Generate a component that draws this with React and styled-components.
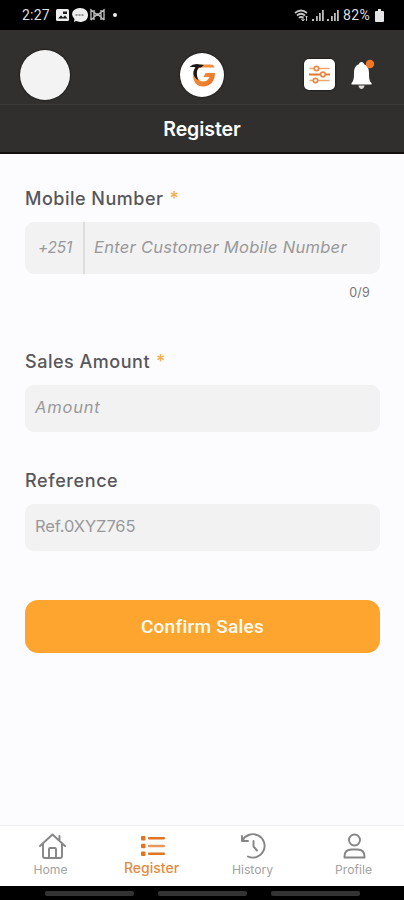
import React from "react";
import styled, { createGlobalStyle } from "styled-components";

const GlobalStyle = createGlobalStyle`
  *, *::before, *::after { box-sizing: border-box; }
  body { margin: 0; background: #fcfcfe; font-family: Inter, "Open Sans", sans-serif; }
`;

const Screen = styled.div`
  width: 404px;
  height: 900px;
  display: flex;
  flex-direction: column;
  overflow: hidden;
  background: #fcfcfe;
`;

const StatusBar = styled.div`
  height: 30px;
  flex: none;
  display: flex;
  align-items: center;
  justify-content: space-between;
  padding: 0 20px 0 22px;
  background: #000;
  color: #dedede;
  font: 400 14px/30px Roboto, sans-serif;
`;

const StatusGroup = styled.div`
  display: flex;
  align-items: center;
  height: 30px;
  gap: ${(p) => p.$gap}px;
`;

const Clock = styled.span`
  width: 31px;
  letter-spacing: 0.2px;
  white-space: nowrap;
`;

const Battery = styled.span`
  width: 29px;
  margin-left: 1px;
  letter-spacing: 0.4px;
`;

const TopBar = styled.header`
  height: 74px;
  flex: none;
  display: grid;
  grid-template-columns: 1fr auto 1fr;
  align-items: center;
  padding: 15px 29px 0 20px;
  background: #31302e;
`;

const Avatar = styled.div`
  width: 50px;
  height: 50px;
  border-radius: 50%;
  background: #f3f3f3;
  box-shadow: 0 0 2px #000;
`;

const Logo = styled.div`
  width: 44px;
  height: 44px;
  margin-left: 9px;
  border-radius: 50%;
  background: #fff;
  box-shadow: 0 0 2px #000;
`;

const Actions = styled.div`
  display: flex;
  justify-content: flex-end;
  align-items: center;
  gap: 14px;
`;

const FilterButton = styled.div`
  width: 31px;
  height: 31px;
  border-radius: 5px;
  background: #fff;
  box-shadow: 0 0 2px #000;
`;

const Title = styled.h1`
  height: 50px;
  flex: none;
  margin: 0;
  border-top: 1px solid #3d3b39;
  border-bottom: 2px solid #11100f;
  background: #302f2d;
  color: #fff;
  text-align: center;
  font-size: 19.5px;
  font-weight: 600;
  line-height: 49px;
  letter-spacing: -0.05px;
`;

const Form = styled.main`
  flex: 1;
  display: flex;
  flex-direction: column;
  padding: 32px 24px 0 25px;
`;

const Label = styled.label`
  height: 24px;
  margin-bottom: 12px;
  color: #57565a;
  font-size: 18px;
  font-weight: 500;
  line-height: 25px;
  letter-spacing: ${(p) => p.$spacing}px;
`;

const Required = styled.span`
  margin-left: 6px;
  color: #f4b04c;
`;

const Field = styled.div`
  height: ${(p) => p.$height}px;
  flex: none;
  display: flex;
  align-items: center;
  border-radius: 9px;
  background: #f2f2f2;
`;

const Prefix = styled.span`
  align-self: stretch;
  display: flex;
  align-items: center;
  width: 60px;
  padding: 0 0 1px 13px;
  border-right: 2px solid #dedede;
  color: #99989a;
  font-size: 15.5px;
  font-style: italic;
  letter-spacing: -0.2px;
`;

const Placeholder = styled.span`
  padding: 0 0 ${(p) => p.$lift}px ${(p) => p.$inset || 10}px;
  color: #99989a;
  white-space: nowrap;
  font-size: 16.5px;
  font-style: ${(p) => (p.$upright ? "normal" : "italic")};
  letter-spacing: ${(p) => p.$spacing}px;
`;

const Counter = styled.div`
  height: 75px;
  padding: 9px 10px 0 0;
  color: #777679;
  text-align: right;
  font-size: 12.5px;
  line-height: 20px;
  letter-spacing: 0.2px;
`;

const Gap = styled.div`
  height: 36px;
`;

const Confirm = styled.button`
  height: 53px;
  margin: 49px 0 0;
  padding: 0;
  border: 0;
  border-radius: 13px;
  background: #fda52f;
  color: #fffaf0;
  font: 500 19px/53px Roboto, sans-serif;
  letter-spacing: 0.25px;
`;

const TabBar = styled.nav`
  height: 61px;
  flex: none;
  display: grid;
  grid-template-columns: repeat(4, 1fr);
  border-top: 1px solid #ededf0;
  background: #fff;
`;

const Tab = styled.div`
  display: flex;
  flex-direction: column;
  align-items: center;
  padding-top: 6px;
  color: ${(p) => (p.$active ? "#df7523" : "#858585")};
`;

const TabIcon = styled.svg`
  width: 29px;
  height: 28px;
  margin-left: ${(p) => p.$nudge}px;
`;

const TabText = styled.span`
  margin-top: ${(p) => (p.$active ? 0 : 2)}px;
  color: ${(p) => (p.$active ? "#e58a43" : "#a2a2a2")};
  font-size: ${(p) => (p.$active ? 14 : 12.2)}px;
  font-weight: ${(p) => (p.$active ? 500 : 400)};
  line-height: 16px;
`;

const SystemBar = styled.div`
  height: 14px;
  flex: none;
  display: flex;
  justify-content: center;
  gap: 24px;
  padding-top: 5px;
  background: #000;
`;

const Pill = styled.i`
  width: 89px;
  height: 5px;
  border-radius: 2px;
  background: #333;
`;

const Signal = () => (
  <svg width="12" height="12" viewBox="0 0 12 12" fill="#bdbdbd">
    <path d="M0 10h2v2H0zM4 7h1.8v5H4zM7 4h1.8v8H7zM10 1h1.8v11H10z" />
  </svg>
);

const StatusIcons = () => (
  <svg width="66" height="16" viewBox="0 0 66 16">
    <rect x="1" y="2" width="13" height="12" rx="1.5" fill="#eee" />
    <path d="M3 11.500l3-3 2 2 2-2 2.500 3H3z" fill="#111" />
    <path d="M8 4.500h4v2.500H8z" fill="#222" />
    <path d="M25 1c5 0 8 3 8 7 0 5-4 7-8 7l-4-1-2 1 .5-3C14 6 19 1 25 1z" fill="#eee" />
    <path d="M20.500 8h9" stroke="#777" strokeWidth="1.600" strokeDasharray="2 1" />
    <path d="M36 13V3l6.500 5L49 3v10M36 13l6.500-6L49 13M39 3v10M46 3v10" fill="none" stroke="#bbb" strokeWidth="1.400" />
    <circle cx="60" cy="8" r="2" fill="#eee" />
  </svg>
);

const Wifi = () => (
  <svg width="15" height="13" viewBox="0 0 15 13" fill="none" stroke="#c5c5c5">
    <path d="M1 4q6-5 12 0M3 6.500q4-3.500 8 0M5 9q2-2 4 0" strokeWidth="1.700" />
    <path d="M9 7v5M12.500 7v5M7.500 10L9 12l1.500-2M11.500 8l1-1 1 1" strokeWidth="1" />
  </svg>
);

const Mark = () => (
  <svg width="44" height="44" viewBox="0 0 44 44">
    <defs>
      <linearGradient id="mark-fill" x1="0" x2="1" y2="1">
        <stop stopColor="#f5a24b" />
        <stop offset="1" stopColor="#e96d24" />
      </linearGradient>
    </defs>
    <path d="M21 11.500h10q2.500 0 3.500 3h-13c-4 0-5.500 3-5 7 .5 4 3 7 6.500 7 3 0 5.500-1.500 6.500-4.500h-6l2-4h9.500c0 8-4.500 13.500-12 13.500-6 0-10-4.500-10-11 0-6 3-11 8-11z" fill="url(#mark-fill)" />
    <path d="M9.500 14q4-4 10.500-2.500l4 .5-3 2.500h-2c-3 3-2.500 8-.5 13-6-3.500-6-9.500-3-13-2.300-1-4-.3-6-.5z" fill="#1d1815" />
  </svg>
);

const Sliders = () => (
  <svg width="31" height="31" viewBox="0 0 31 31" fill="#fff" stroke="#e88a45" strokeWidth="1.700">
    <path d="M5.500 9.500h20M5.500 21.500h20" stroke="#eda670" />
    <path d="M5 15.500h21" stroke="#e47a2a" strokeWidth="2" />
    <circle cx="12.500" cy="9.500" r="2.200" />
    <circle cx="19" cy="15.500" r="2.300" />
    <circle cx="11.500" cy="21.500" r="2.200" />
  </svg>
);

const Bell = () => (
  <svg width="26" height="32" viewBox="0 0 26 32">
    <path d="M12.500 3c-1.500 0-2.400 1-2.400 2.200C6 6.500 5 10 5 14c0 6-.5 8-2.500 10v1.500h20V24c-2-2-2.500-4-2.500-10 0-4-1.100-7.500-5.100-8.800C14.900 4 14 3 12.500 3z" fill="#fff" />
    <path d="M9.500 26.500h6c-.4 4.500-5.600 4.500-6 0z" fill="#ddd" />
    <circle cx="21" cy="5" r="4.200" fill="#ef7825" />
  </svg>
);

const Outline = styled.g`
  fill: none;
  stroke: currentColor;
  stroke-width: 1.9;
  stroke-linecap: round;
  stroke-linejoin: round;
`;

const tabs = [
  {
    name: "Home",
    nudge: 4,
    icon: (
      <Outline>
        <path d="M2 14L14.500 2.500 27 14M5 12v12q0 2 2 2h15q2 0 2-2V12M11 26v-9q0-1 1-1h5q1 0 1 1v9M21.500 4v4" />
      </Outline>
    ),
  },
  {
    name: "Register",
    nudge: 2,
    active: true,
    icon: (
      <g fill="currentColor">
        <rect x="3" y="4" width="4.500" height="4.500" rx="1" />
        <rect x="3" y="11.700" width="4.500" height="4.500" rx="1" />
        <rect x="3" y="19.400" width="4.500" height="4.500" rx="1" />
        <rect x="10" y="5" width="17" height="2.500" rx="1" />
        <rect x="10" y="12.700" width="17" height="2.500" rx="1" opacity=".75" />
        <rect x="10" y="20.400" width="17" height="2.500" rx="1" />
      </g>
    ),
  },
  {
    name: "History",
    nudge: 1,
    icon: (
      <Outline>
        <path d="M3.500 8.500A11.700 11.700 0 1 1 9 24.500M3 4v5h6M14.500 9v5.500l3.500 4" />
      </Outline>
    ),
  },
  {
    name: "Profile",
    nudge: 1,
    icon: (
      <Outline>
        <circle cx="14.500" cy="8" r="5.500" />
        <path d="M4.500 25.500v-1q0-7 7-7h6q7 0 7 7v1z" />
      </Outline>
    ),
  },
];

export default function App() {
  return (
    <Screen>
      <GlobalStyle />
      <StatusBar>
        <StatusGroup $gap={2}>
          <Clock>2:27</Clock>
          <StatusIcons />
        </StatusGroup>
        <StatusGroup $gap={3}>
          <Wifi />
          <Signal />
          <Signal />
          <Battery>82%</Battery>
          <svg width="9" height="13" viewBox="0 0 9 13" fill="#e5e5e5">
            <path d="M3 0h3v2h2q1 0 1 1v9q0 1-1 1H1q-1 0-1-1V3q0-1 1-1h2z" />
          </svg>
        </StatusGroup>
      </StatusBar>
      <TopBar>
        <Avatar />
        <Logo><Mark /></Logo>
        <Actions>
          <FilterButton><Sliders /></FilterButton>
          <Bell />
        </Actions>
      </TopBar>
      <Title>Register</Title>
      <Form>
        <Label $spacing={0.5}>Mobile Number<Required>*</Required></Label>
        <Field $height={52}>
          <Prefix>+251</Prefix>
          <Placeholder $inset={9} $lift={2} $spacing={0.27}>Enter Customer Mobile Number</Placeholder>
        </Field>
        <Counter>0/9</Counter>
        <Label $spacing={0.52}>Sales Amount<Required>*</Required></Label>
        <Field $height={47}>
          <Placeholder $lift={3} $spacing={0.8}>Amount</Placeholder>
        </Field>
        <Gap />
        <Label $spacing={0.6}>Reference</Label>
        <Field $height={47}>
          <Placeholder $upright $lift={3} $spacing={-0.1}>Ref.0XYZ765</Placeholder>
        </Field>
        <Confirm>Confirm Sales</Confirm>
      </Form>
      <TabBar>
        {tabs.map(({ name, active, nudge, icon }) => (
          <Tab key={name} $active={active}>
            <TabIcon viewBox="0 0 29 28" $nudge={nudge}>{icon}</TabIcon>
            <TabText $active={active}>{name}</TabText>
          </Tab>
        ))}
      </TabBar>
      <SystemBar><Pill /><Pill /><Pill /></SystemBar>
    </Screen>
  );
}
